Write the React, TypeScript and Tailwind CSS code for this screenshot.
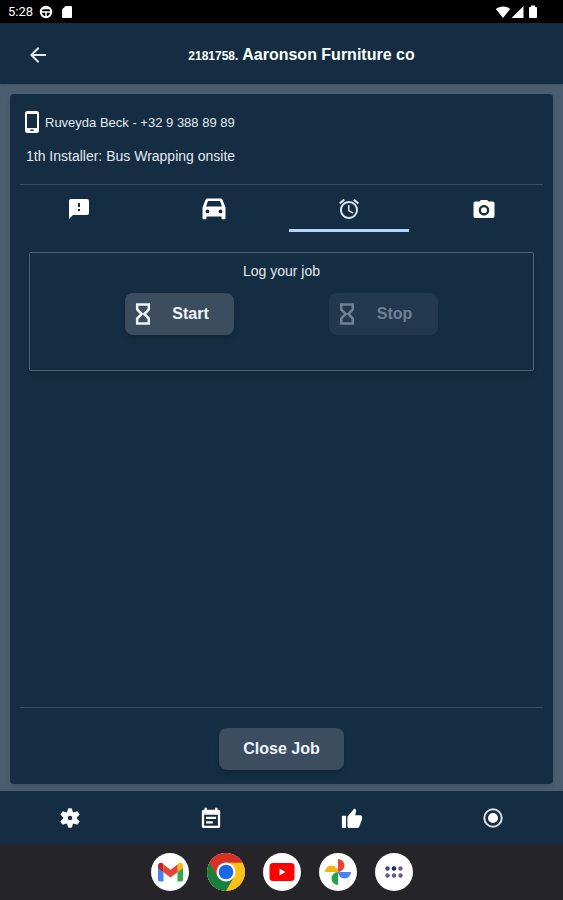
import { useState } from 'react'
import { MdAlarm, MdFeedback } from 'react-icons/md'
import { IoMdArrowBack, IoMdCamera } from 'react-icons/io'

function CarIcon({ className }: { className?: string }) {
  return (
    <svg viewBox="0 0 24 24" className={className} fill="currentColor">
      <path
        fillRule="evenodd"
        d="M5.500 1.500h13c1 0 1.800.6 2.100 1.500L23.500 10.500V21c0 .8-.5 1.300-1.300 1.300h-1.400c-.8 0-1.300-.5-1.300-1.300v-1.500h-15V21c0 .8-.5 1.300-1.300 1.300H1.800C1 22.300.5 21.800.5 21V10.500L3.400 3c.3-.9 1.100-1.500 2.100-1.500zM6 4 4 9.500h16L18 4zM5.500 12.500a1.900 1.900 0 1 0 0 3.800 1.900 1.900 0 0 0 0-3.800zm13 0a1.900 1.900 0 1 0 0 3.800 1.900 1.900 0 0 0 0-3.800z"
      />
    </svg>
  )
}

function PhoneIcon({ className }: { className?: string }) {
  return (
    <svg viewBox="0 0 24 24" className={className} fill="currentColor">
      <path
        fillRule="evenodd"
        d="M7.500 1h9A2.500 2.500 0 0 1 19 3.500v17a2.500 2.500 0 0 1-2.500 2.500h-9A2.500 2.500 0 0 1 5 20.500v-17A2.500 2.500 0 0 1 7.500 1zM7 4v14h10V4zm3.500 15.500V21h3v-1.500z"
      />
    </svg>
  )
}

function GearIcon({ className }: { className?: string }) {
  return (
    <svg viewBox="0 0 24 24" className={className} fill="currentColor">
      <path
        fillRule="evenodd"
        stroke="currentColor"
        strokeLinejoin="round"
        d="M10.300 2h3.400l.9 3.600 1.400.8 4-1.200 1.900 3-2.700 2.900v1.800l2.700 2.900-1.900 3-4-1.200-1.400.8-.9 3.600h-3.400l-.9-3.600-1.400-.8-4 1.200-1.900-3 2.700-2.900v-1.800L2.100 8.200l1.900-3 4 1.200 1.400-.8zM12 9a3 3 0 1 0 0 6 3 3 0 0 0 0-6z"
      />
    </svg>
  )
}

function NoteIcon({ className }: { className?: string }) {
  return (
    <svg viewBox="0 0 24 24" className={className} fill="currentColor">
      <path
        fillRule="evenodd"
        d="M5 .800h2.500V3h9V.8H19V3h1c1.100 0 2 .9 2 2v16c0 1.100-.9 2-2 2H4c-1.100 0-2-.9-2-2V5c0-1.100.9-2 2-2h1zM4.500 8.500v12h15v-12z"
      />
      <path d="M6.500 10.500h11v2.500h-11zM6.500 15.500h7.500V18H6.500z" />
    </svg>
  )
}

function ThumbIcon({ className }: { className?: string }) {
  return (
    <svg viewBox="0 0 24 24" className={className} fill="currentColor">
      <path d="M1 9.500h4.500V23H1zM7 10.500 14.500 1.500l1.500 1.200c.4.4.6.9.5 1.500L15.500 9H21a2 2 0 0 1 2 2v2.500L19.800 21.500a2.300 2.300 0 0 1-2.100 1.500H9a2 2 0 0 1-2-2z" />
    </svg>
  )
}

function RadioIcon({ className }: { className?: string }) {
  return (
    <svg viewBox="0 0 24 24" className={className}>
      <circle cx="12" cy="12" r="9.500" fill="none" stroke="#d8dee6" strokeWidth="2.200" />
      <circle cx="12" cy="12" r="5.500" fill="currentColor" />
    </svg>
  )
}

function HourglassIcon({ className }: { className?: string }) {
  return (
    <svg viewBox="0 0 24 24" className={className} fill="none" stroke="currentColor" strokeWidth="2.500">
      <path d="M6.200 2.500h11.600v5L13.300 12l4.500 4.500v5H6.200v-5l4.500-4.500-4.500-4.500z" />
    </svg>
  )
}

const tabs = [
  { id: 'feedback', label: 'Feedback', icon: MdFeedback },
  { id: 'travel', label: 'Travel', icon: CarIcon },
  { id: 'log', label: 'Log', icon: MdAlarm },
  { id: 'photos', label: 'Photos', icon: IoMdCamera }
]

const navItems = [
  { id: 'settings', label: 'Settings', icon: GearIcon },
  { id: 'planning', label: 'Planning', icon: NoteIcon },
  { id: 'approved', label: 'Approved', icon: ThumbIcon },
  { id: 'record', label: 'Record', icon: RadioIcon }
]

function StatusBar() {
  return (
    <div className="flex h-[23px] items-center justify-between bg-black pl-2 pr-[25px] text-white">
      <div className="flex items-center gap-1.5">
        <span className="font-[Roboto,sans-serif] text-[13px]">5:28</span>
        <svg viewBox="0 0 14 14" className="h-3.5 w-3.5" fill="none" stroke="currentColor">
          <circle cx="7" cy="7" r="5.200" strokeWidth="2" />
          <path d="M2 7h10M7 7v5" strokeWidth="1.500" />
          <path d="M4 3.500h6" strokeWidth="1.500" />
        </svg>
        <svg viewBox="0 0 12 14" className="ml-0.5 h-3.5 w-3" fill="currentColor">
          <path d="M4.500 1H10a1 1 0 0 1 1 1v10a1 1 0 0 1-1 1H2a1 1 0 0 1-1-1V4.500z" />
        </svg>
      </div>
      <div className="flex items-center">
        <svg viewBox="0 0 16 14" className="h-3.5 w-4" fill="currentColor">
          <path d="M8 13 .8 4C4.800.6 11.200.6 15.200 4z" />
        </svg>
        <svg viewBox="0 0 13 14" className="h-3.5 w-[13px]" fill="currentColor">
          <path d="M12.500 1v12H.5z" />
        </svg>
        <svg viewBox="0 0 10 14" className="ml-1 h-3.5 w-2.5" fill="currentColor">
          <path d="M3 .5h4V2h1.200c.5 0 .8.3.8.8v9.400c0 .5-.3.800-.8.800H1.800c-.5 0-.8-.3-.8-.8V2.800c0-.5.3-.8.8-.8H3z" />
        </svg>
      </div>
    </div>
  )
}

function LogButton({ label, disabled, onClick }: { label: string; disabled: boolean; onClick: () => void }) {
  return (
    <button
      type="button"
      disabled={disabled}
      onClick={onClick}
      className="flex h-[42px] w-[109px] items-center rounded-lg bg-[#3c4d60] pl-1.5 text-base font-bold text-[#f0f4fa] shadow-md disabled:bg-[#22384f] disabled:text-[#6f8194] disabled:shadow-none"
    >
      <HourglassIcon className="h-6 w-6 shrink-0" />
      <span className="flex-1 pr-2 text-center">{label}</span>
    </button>
  )
}

function GmailLogo() {
  return (
    <svg viewBox="0 0 38 38" className="h-full w-full">
      <path fill="#4285f4" d="M7 13.500v13c0 1.200.8 2 2 2h3.500V16z" />
      <path fill="#34a853" d="M32 13.500v13c0 1.200-.8 2-2 2h-3.500V16z" />
      <path fill="#fbbc04" d="M26.500 11.500v7.800l5.500-4.200v-2.600c0-2.500-2.600-3.600-4.500-2.200z" />
      <path fill="#c5221f" d="M7 12.500v2.600l5.500 4.200v-7.800l-1-1.200C9.600 8.900 7 10 7 12.500z" />
      <path fill="#ea4335" d="M12.500 11.500l7 5.300 7-5.300v7.800l-7 5.300-7-5.300z" />
    </svg>
  )
}

function ChromeLogo() {
  return (
    <svg viewBox="0 0 38 38" className="h-full w-full">
      <circle cx="19" cy="19" r="19" fill="#ea4335" />
      <path fill="#188038" d="M2.500 9.500A19 19 0 0 0 19 38l8.200-14.200L19 19l-8.200 4.800z" />
      <path fill="#fbc116" d="M19 38A19 19 0 0 0 35.500 9.500H19V19l8.200 4.800z" />
      <path fill="#d93025" d="M2.500 9.500a19 19 0 0 1 33 0H19a9.500 9.500 0 0 0-8.200 14.300z" />
      <circle cx="19" cy="19" r="9.500" fill="#fff" />
      <circle cx="19" cy="19" r="7.300" fill="#1a68e8" />
    </svg>
  )
}

function YoutubeLogo() {
  return (
    <svg viewBox="0 0 38 38" className="h-full w-full">
      <rect x="6.500" y="10" width="25" height="18" rx="3.500" fill="#f00" />
      <path d="M16.500 15.500v7l6-3.500z" fill="#fff" />
    </svg>
  )
}

function PhotosLogo() {
  return (
    <svg viewBox="0 0 38 38" className="h-full w-full">
      <path fill="#ea4335" d="M19 6a6.500 6.500 0 0 1 0 13z" />
      <path fill="#4285f4" d="M32 19a6.500 6.500 0 0 1-13 0z" />
      <path fill="#1ea446" d="M19 32a6.500 6.500 0 0 1 0-13z" />
      <path fill="#f5b50a" d="M6 19a6.500 6.500 0 0 1 13 0z" />
    </svg>
  )
}

function AllAppsLogo() {
  return (
    <svg viewBox="0 0 38 38" className="h-full w-full">
      <circle cx="12.500" cy="15.500" r="2.200" fill="#3d4a86" />
      <circle cx="19" cy="15.500" r="2.200" fill="#1a1f80" />
      <circle cx="25.500" cy="15.500" r="2.200" fill="#8a5478" />
      <circle cx="12.500" cy="22.500" r="2.200" fill="#62607c" />
      <circle cx="19" cy="22.500" r="2.200" fill="#62607c" />
      <circle cx="25.500" cy="22.500" r="2.200" fill="#62607c" />
    </svg>
  )
}

const dockApps = [
  { name: 'Gmail', logo: GmailLogo },
  { name: 'Chrome', logo: ChromeLogo },
  { name: 'YouTube', logo: YoutubeLogo },
  { name: 'Photos', logo: PhotosLogo },
  { name: 'All apps', logo: AllAppsLogo }
]

function App() {
  const [activeTab, setActiveTab] = useState('log')
  const [running, setRunning] = useState(false)

  return (
    <div className="flex min-h-screen flex-col bg-[#4b5d70] font-['Liberation_Sans',Arial,sans-serif] text-[#e4e9f0]">
      <StatusBar />

      <header className="grid h-[61px] grid-cols-[76px_1fr] items-center bg-[#142d42] pt-0.5 shadow-sm">
        <button type="button" aria-label="Back" className="flex justify-center text-[#e4e9f0]">
          <IoMdArrowBack className="h-6 w-6" />
        </button>
        <h1 className="pr-9 text-center text-base font-bold text-white">
          <span className="text-xs">2181758.</span> Aaronson Furniture co
        </h1>
      </header>

      <main className="flex flex-1 flex-col px-2.5 pb-[7px] pt-2.5">
        <section className="flex flex-1 flex-col rounded bg-[#142d42] shadow-md">
          <div className="mx-2.5 flex h-[91px] flex-col gap-3 border-b border-[#334d63] pt-4">
            <p className="flex items-center text-[13px]">
              <PhoneIcon className="h-6 w-6 shrink-0 text-white" />
              <span className="pl-px pt-0.5">Ruveyda Beck - +32 9 388 89 89</span>
            </p>
            <p className="pl-1.5 text-sm leading-5">1th Installer: Bus Wrapping onsite</p>
          </div>

          <div role="tablist" className="grid grid-cols-4 px-0.5">
            {tabs.map(({ id, label, icon: Icon }) => (
              <button
                key={id}
                type="button"
                role="tab"
                aria-label={label}
                aria-selected={activeTab === id}
                onClick={() => setActiveTab(id)}
                className={`mx-[7px] flex h-[47px] items-center justify-center border-b-3 pt-1 ${activeTab === id ? 'border-[#b5d4fa] text-[#dde5ee]' : 'border-transparent text-white'}`}
              >
                <Icon className="h-6 w-6" />
              </button>
            ))}
          </div>

          <div className="mx-[19px] mt-5 h-[119px] rounded-xs border border-[#49637a] pt-2 shadow-md">
            <h2 className="text-center text-sm leading-5">Log your job</h2>
            <div className="mt-3 flex justify-evenly">
              <LogButton label="Start" disabled={running} onClick={() => setRunning(true)} />
              <LogButton label="Stop" disabled={!running} onClick={() => setRunning(false)} />
            </div>
          </div>

          <div className="mx-2.5 mt-auto flex h-[77px] items-start justify-center border-t border-[#334d63] pt-5">
            <button type="button" className="h-[42px] rounded-lg bg-[#3c4d60] px-6 text-base font-bold text-[#f0f4fa] shadow-md">
              Close Job
            </button>
          </div>
        </section>
      </main>

      <nav className="grid h-[53px] grid-cols-4 bg-[#142d42] text-white">
        {navItems.map(({ id, label, icon: Icon }) => (
          <button key={id} type="button" aria-label={label} className="flex items-center justify-center">
            <Icon className="h-[22px] w-[22px]" />
          </button>
        ))}
      </nav>

      <div className="flex h-14 items-center justify-center gap-[18px] bg-[#252529]">
        {dockApps.map(({ name, logo: Logo }) => (
          <button key={name} type="button" aria-label={name} className="h-[38px] w-[38px] overflow-hidden rounded-full bg-white">
            <Logo />
          </button>
        ))}
      </div>
    </div>
  )
}

export default App
